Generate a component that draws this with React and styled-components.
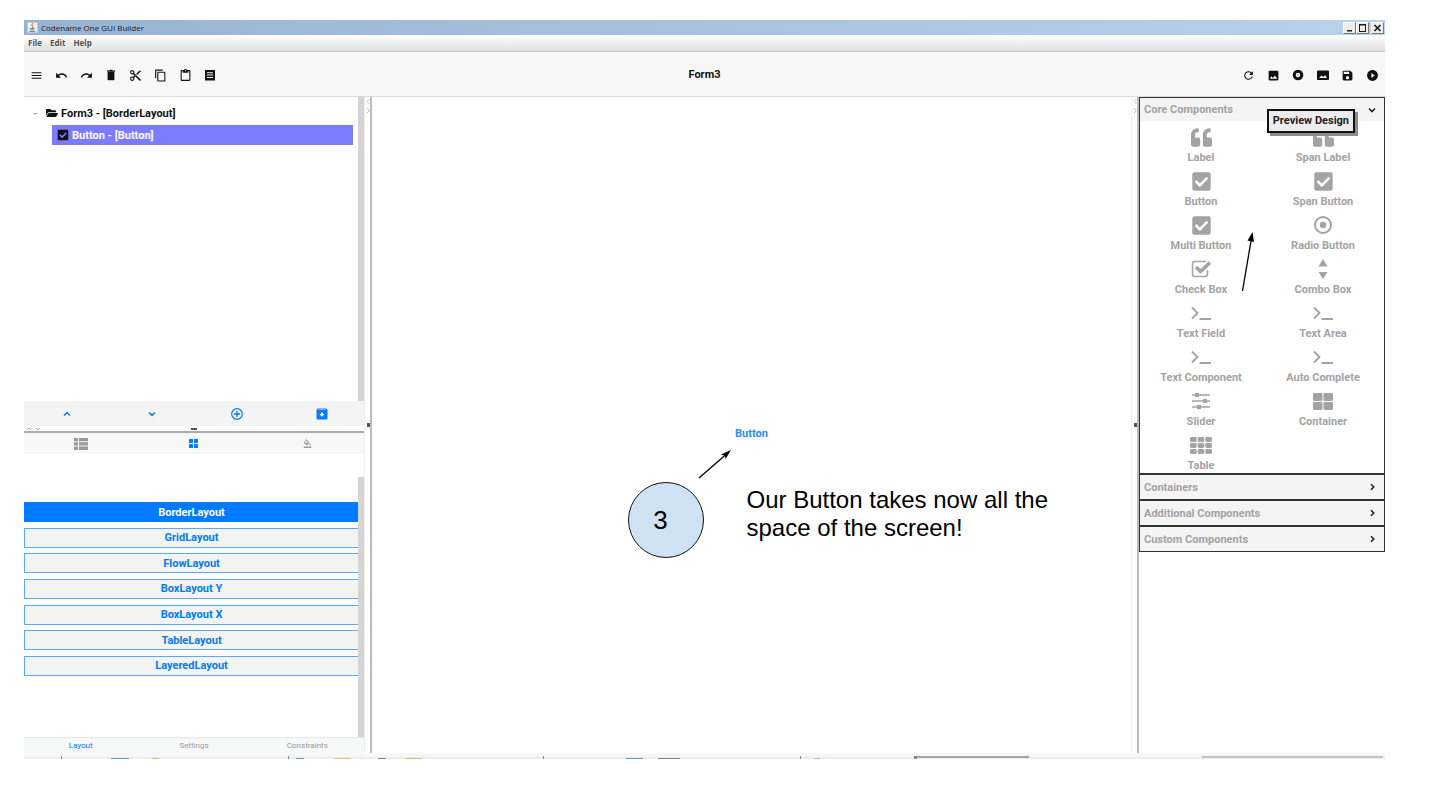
import React from 'react';
import styled, { createGlobalStyle } from 'styled-components';
import { FaQuoteLeft, FaCheckSquare, FaFolderOpen } from 'react-icons/fa';
import {
  MdMenu, MdUndo, MdRedo, MdContentCut, MdContentCopy, MdContentPaste, MdRefresh, MdSave,
  MdImage, MdPlayCircleFilled, MdFormatColorFill,
} from 'react-icons/md';

const ui = 'Roboto, "Liberation Sans", sans-serif';
const blue = '#007aff';

const GlobalStyle = createGlobalStyle`
  * { box-sizing: border-box; }
  body { margin: 0; background: #fff; font-family: ${ui}; font-size: 11px; }
  button { font: inherit; color: inherit; background: none; border: 0; padding: 0; margin: 0; }
  svg { display: block; flex: none; }
`;

const Page = styled.div`
  min-height: 100vh;
  padding: 20px 50px 38px 24px;
  display: flex;
`;
const Window = styled.div`
  flex: 1;
  min-width: 0;
  display: flex;
  flex-direction: column;
`;
const TitleBar = styled.header`
  height: 15px;
  display: flex;
  align-items: center;
  gap: 3px;
  padding: 0 1px 0 3px;
  background: linear-gradient(90deg, #98b3d1, #b9d1ea);
  font: 8px "Open Sans", sans-serif;
  color: #1b1b1b;
`;
const WindowTitle = styled.span`
  flex: 1;
`;
const WindowButtons = styled.div`
  display: flex;
`;
const WindowButton = styled.button`
  width: 13px;
  height: 12px;
  margin-left: ${(p) => (p.$apart ? '2px' : '0')};
  display: grid;
  place-items: center;
  background: #efedea;
  border: 1px solid;
  border-color: #fff #777 #777 #fff;
`;
const MenuBar = styled.nav`
  height: 17px;
  display: flex;
  align-items: center;
  gap: 8px;
  padding: 0 4px;
  background: linear-gradient(#fff, #dedede);
  border-bottom: 1px solid #c9c9c9;
  font: 700 8px/12px "Open Sans", sans-serif;
  color: #555;
`;
const Toolbar = styled.div`
  height: 45px;
  display: grid;
  grid-template-columns: 1fr auto 1fr;
  align-items: center;
  padding: 2px 6px 0;
  background: #f7f7f7;
  border-bottom: 1px solid #ddd;
  color: #111;
`;
const Tools = styled.div`
  display: flex;
  width: ${(p) => p.$width};
  justify-content: space-between;
  justify-self: ${(p) => p.$side};
`;
const FormTitle = styled.h1`
  margin: 0;
  font-size: 11px;
  line-height: 14px;
  color: #111;
`;
const Body = styled.div`
  flex: 1;
  display: flex;
  min-height: 0;
`;

const Sidebar = styled.aside`
  width: 340px;
  display: flex;
  flex-direction: column;
`;
const Tree = styled.ul`
  height: 304px;
  margin: 0;
  padding: 6px 5px 0 0;
  list-style: none;
  border-right: 6px solid #d4d4d4;
  font-weight: 700;
`;
const TreeRow = styled.li`
  height: 20px;
  display: flex;
  align-items: center;
  gap: 3px;
  padding-left: ${(p) => (p.$selected ? '5px' : '9px')};
  margin: ${(p) => (p.$selected ? '2px 0 0 28px' : '0')};
  background: ${(p) => (p.$selected ? '#7b7bff' : 'none')};
  color: ${(p) => (p.$selected ? '#fff' : '#111')};
  svg { color: #111; }
`;
const Toggle = styled.button`
  width: 10px;
  text-align: left;
  color: #999;
`;
const ActionBar = styled.div`
  height: 25px;
  display: flex;
  background: #f4f4f4;
  color: ${blue};
`;
const BarButton = styled.button`
  flex: 1;
  display: grid;
  place-items: center;
  color: ${(p) => (p.$active ? blue : '#999')};
  ${ActionBar} & { color: ${blue}; }
`;
const Splitter = styled.div`
  height: 7px;
  display: grid;
  grid-template-columns: 1fr auto 1fr;
  align-items: center;
  border-bottom: 2px solid #aaa;
  padding: 0 3px;
  svg { justify-self: start; }
`;
const TabBar = styled.div`
  height: 21px;
  display: flex;
  background: #f7f7f7;
`;
const LayoutArea = styled.div`
  flex: 1;
  display: flex;
  flex-direction: column;
  padding-top: 23px;
`;
const LayoutScroll = styled.div`
  flex: 1;
  padding-top: 25px;
  border-right: 6px solid #d4d4d4;
`;
const LayoutList = styled.div`
  height: 174px;
  display: flex;
  flex-direction: column;
  justify-content: space-between;
`;
const LayoutButton = styled.button`
  height: 20px;
  font-weight: 700;
  border: 1px solid ${(p) => (p.$selected ? blue : '#5aa7fb')};
  border-right: 0;
  background: ${(p) => (p.$selected ? blue : '#f3f3f2')};
  color: ${(p) => (p.$selected ? '#fff' : blue)};
`;
const FooterTabs = styled.div`
  height: 16px;
  display: flex;
  border-top: 1px solid #e6e6e6;
  background: #f7f8f8;
  font-size: 8px;
`;

const Divider = styled.div`
  width: 8px;
  display: grid;
  grid-template-rows: 1fr auto 1fr;
  align-items: start;
  justify-items: end;
  border-right: 2px solid #bbb;
  border-left: 1px solid #f0f0f0;
  background: #fff;
`;
const Grip = styled.span`
  width: 3px;
  height: 4px;
  background: #555;
`;

const Canvas = styled.main`
  flex: 1;
  position: relative;
  display: grid;
  background: #fff;
`;
const CanvasButton = styled.button`
  padding-top: 16px;
  font-weight: 700;
  color: #2a8cff;
`;
const Note = styled.div`
  position: absolute;
  left: calc(50% - 124px);
  top: 350px;
  width: 460px;
`;
const NoteArrow = styled.svg`
  margin-left: 68px;
`;
const NoteBody = styled.div`
  display: flex;
  align-items: flex-start;
  gap: 43px;
`;
const Step = styled.span`
  flex: none;
  width: 76px;
  height: 76px;
  padding-right: 10px;
  display: grid;
  place-items: center;
  border: 1px solid #111;
  border-radius: 50%;
  background: #cfe2f3;
  font: 26px "Liberation Sans", sans-serif;
`;
const NoteText = styled.p`
  margin: 0;
  padding-top: 4px;
  width: 310px;
  font: 24px/28px "Liberation Sans", sans-serif;
`;

const Palette = styled.aside`
  position: relative;
  width: 246px;
`;
const Accordion = styled.div`
  border: 1px solid #333;
`;
const SectionHeader = styled.button`
  width: 100%;
  height: ${(p) => (p.$open ? '23px' : '26px')};
  display: flex;
  align-items: center;
  justify-content: space-between;
  padding: 0 7px 0 4px;
  background: #f4f4f4;
  border-top: ${(p) => (p.$open ? '0' : '2px solid #333')};
  font-weight: 700;
  color: #a3a3a3;
`;
const Items = styled.div`
  display: grid;
  grid-template-columns: 1fr 1fr;
  grid-auto-rows: 44px;
`;
const Item = styled.button`
  display: grid;
  grid-template-rows: 28px 16px;
  justify-items: center;
  align-items: center;
  font-weight: 700;
  color: #a3a3a3;
  svg { margin-top: 4px; }
`;
const Tooltip = styled.div`
  position: absolute;
  top: 12px;
  right: 30px;
  padding: 3px 4px;
  border: 2px solid #111;
  background: #ececec;
  box-shadow: 3px 3px 0 #8c8c8c;
  font-weight: 700;
  line-height: 14px;
  white-space: nowrap;
  color: #222;
`;
const PointerArrow = styled.svg`
  position: absolute;
  top: 134px;
  right: 127px;
`;

const Taskbar = styled.svg`
  width: 100%;
  height: 6px;
`;

const Glyph = ({ w = 20, h = 20, box, children }) => (
  <svg width={w} height={h} viewBox={box || `0 0 ${w} ${h}`} fill="currentColor" aria-hidden="true">{children}</svg>
);
const Line = (p) => <path fill="none" stroke="currentColor" strokeWidth="2" {...p} />;

const Chevron = ({ d }) => <Glyph w={10} h={10}><Line d={d} strokeWidth="1.500" /></Glyph>;
const up = 'M2 6.5 5 3.5 8 6.5';
const down = 'M2 3.5 5 6.5 8 3.5';
const right = 'M4 2.2 6.8 5 4 7.8';

const Trash = () => <Glyph w={12} h={12}><path d="M2 1.500h2.200L5 .8h2l.8.7H10v1.200H2zM2.600 3h6.800v7.200q0 1.100-1.100 1.100H3.700q-1.100 0-1.100-1.100z" /></Glyph>;
const Sheet = () => <Glyph w={12} h={12}><path fillRule="evenodd" d="M1 1h10v10.400H1zM3 3.300v1h6v-1zM3 5.600v1h6v-1zM3 7.900v1h6v-1z" /></Glyph>;
const Ring = () => <Glyph w={12} h={12}><circle cx="6" cy="6" r="3.800" fill="none" stroke="currentColor" strokeWidth="3" /><circle cx="6" cy="6" r=".8" fill="#999" /></Glyph>;
const WideImage = () => <Glyph w={12} h={12}><path fillRule="evenodd" d="M1 1.500h10q1 0 1 1v7.500q0 1-1 1H1q-1 0-1-1V2.500q0-1 1-1zM2 9h8L8 6 6.500 8 4.500 6.500z" /></Glyph>;

const Dot = () => <Glyph><circle cx="10" cy="10" r="8" fill="none" stroke="currentColor" strokeWidth="2" /><circle cx="10" cy="10" r="3.200" /></Glyph>;
const CheckOutline = () => <Glyph><Line strokeWidth="1.500" d="M15 2.500H4Q1.500 2.500 1.500 5V15Q1.500 17.500 4 17.500H14Q16.500 17.500 16.500 15V11" /><Line strokeWidth="3.600" d="M5 8 9.500 12.500 19 3.500" /></Glyph>;
const Sort = () => <Glyph><path d="M10 0 14.500 7.500H5.500zM5.500 13H14.500L10 20z" /></Glyph>;
const Prompt = () => <Glyph><Line strokeWidth="1.800" d="M1 4.500 6.500 10 1 15.500M8.500 16H20" /></Glyph>;
const Sliders = () => (
  <Glyph>
    <Line strokeWidth="1.500" d="M1 4H19M1 10H19M1 16H19" />
    <path d="M4 2h4v4H4zM12 8h4v4h-4zM6 14h4v4H6z" />
  </Glyph>
);
const Blocks = ({ w, h, cols, rows, gap, r = 1.4 }) => {
  const bw = (w - gap * (cols - 1)) / cols;
  const bh = (h - gap * (rows - 1)) / rows;
  return (
    <Glyph w={w} h={h}>
      {Array.from({ length: cols * rows }, (_, i) => (
        <rect key={i} x={(i % cols) * (bw + gap)} y={Math.floor(i / cols) * (bh + gap)} width={bw} height={bh} rx={r} />
      ))}
    </Glyph>
  );
};
const ListIcon = () => (
  <Glyph w={14} h={12}><path d="M0 0h4v3.300H0zM5 0h9v3.300H5zM0 4.300h4v3.300H0zM5 4.300h9v3.300H5zM0 8.600h4v3.300H0zM5 8.600h9v3.300H5z" /></Glyph>
);
const CirclePlus = () => (
  <Glyph w={12} h={12}><circle cx="6" cy="6" r="5.300" fill="none" stroke="currentColor" strokeWidth="1.200" /><Line strokeWidth="1.300" d="M6 3V9M3 6H9" /></Glyph>
);
const ArchiveIcon = () => (
  <Glyph w={12} h={12}><path fillRule="evenodd" d="M1.500 .5h9l1 1.500v8.500q0 1-1 1h-9q-1 0-1-1V2zM2 2h8l-.4-.6H2.400zM5 4.500V6H3.200L6 8.800 8.800 6H7V4.500z" /></Glyph>
);

const JavaCup = () => (
  <svg width="11" height="11" viewBox="0 0 10 11" preserveAspectRatio="none" aria-hidden="true">
    <rect x=".5" y=".5" width="9" height="10" fill="#eef1f4" stroke="#c3ccd5" />
    <path d="M5.500 1.500Q3.500 3 5 4.200 5.800 5 4.800 6" fill="none" stroke="#e2762c" />
    <path d="M2.500 6.500H7M3 8H6.500M2 9.400H7.500" stroke="#5382a1" strokeWidth=".9" />
  </svg>
);

const leftTools = [
  ['Menu', MdMenu], ['Undo', MdUndo], ['Redo', MdRedo], ['Delete', Trash],
  ['Cut', MdContentCut], ['Copy', MdContentCopy], ['Paste', MdContentPaste], ['Source', Sheet],
];
const rightTools = [
  ['Refresh', MdRefresh], ['Image', MdImage], ['Record', Ring], ['Preview', WideImage],
  ['Save', MdSave], ['Run', MdPlayCircleFilled],
];
const layouts = ['BorderLayout', 'GridLayout', 'FlowLayout', 'BoxLayout Y', 'BoxLayout X', 'TableLayout', 'LayeredLayout'];

const Quote = () => <FaQuoteLeft size={21} />;
const Check = () => <FaCheckSquare size={21} />;
const Large = () => <Blocks w={20} h={17} cols={2} rows={2} gap={1} />;
const Table = () => <Blocks w={22} h={17} cols={3} rows={3} gap={1} />;
const components = [
  ['Label', Quote], ['Span Label', Quote],
  ['Button', Check], ['Span Button', Check],
  ['Multi Button', Check], ['Radio Button', Dot],
  ['Check Box', CheckOutline], ['Combo Box', Sort],
  ['Text Field', Prompt], ['Text Area', Prompt],
  ['Text Component', Prompt], ['Auto Complete', Prompt],
  ['Slider', Sliders], ['Container', Large],
  ['Table', Table],
];

const ToolGroup = ({ tools, width, side }) => (
  <Tools $width={width} $side={side}>
    {tools.map(([name, Icon]) => (
      <button key={name} type="button" aria-label={name}><Icon size={13} width={12} /></button>
    ))}
  </Tools>
);

const PaneDivider = () => (
  <Divider>
    <svg width="4" height="16" viewBox="0 0 4 16" fill="none" stroke="#bbb"><path d="M3.500 2 1 4.500 3.500 7M1 11 3.500 13.500 1 16" /></svg>
    <Grip />
  </Divider>
);

export default function App() {
  return (
    <Page>
      <GlobalStyle />
      <Window>
        <TitleBar>
          <JavaCup />
          <WindowTitle>Codename One GUI Builder</WindowTitle>
          <WindowButtons>
            <WindowButton type="button" aria-label="Minimize"><Glyph w={9} h={8}><path d="M2 6h5v1.500H2z" /></Glyph></WindowButton>
            <WindowButton type="button" aria-label="Maximize"><Glyph w={9} h={8}><path fillRule="evenodd" d="M1 0h7v8H1zM2 1.500V7h5V1.500z" /></Glyph></WindowButton>
            <WindowButton type="button" aria-label="Close" $apart><Glyph w={9} h={8}><Line strokeWidth="1.700" d="M1.500 1 7.500 7M7.500 1 1.500 7" /></Glyph></WindowButton>
          </WindowButtons>
        </TitleBar>
        <MenuBar>
          <button type="button">File</button>
          <button type="button">Edit</button>
          <button type="button">Help</button>
        </MenuBar>
        <Toolbar>
          <ToolGroup tools={leftTools} width="186px" side="start" />
          <FormTitle>Form3</FormTitle>
          <ToolGroup tools={rightTools} width="137px" side="end" />
        </Toolbar>
        <Body>
          <Sidebar>
            <Tree>
              <TreeRow><Toggle type="button" aria-label="Collapse">-</Toggle><FaFolderOpen size={12} />Form3 - [BorderLayout]</TreeRow>
              <TreeRow $selected><FaCheckSquare size={12} />Button - [Button]</TreeRow>
            </Tree>
            <ActionBar>
              <BarButton type="button" aria-label="Move up"><Chevron d={up} /></BarButton>
              <BarButton type="button" aria-label="Move down"><Chevron d={down} /></BarButton>
              <BarButton type="button" aria-label="Add"><CirclePlus /></BarButton>
              <BarButton type="button" aria-label="Archive"><ArchiveIcon /></BarButton>
            </ActionBar>
            <Splitter>
              <svg width="14" height="4" viewBox="0 0 14 4" fill="none" stroke="#aaa"><path d="M0 3 2 1 4 3M9 1 11 3 13 1" /></svg>
              <svg width="6" height="4" viewBox="0 0 6 4"><path d="M0 1H6V3H0z" fill="#555" /></svg>
            </Splitter>
            <TabBar>
              <BarButton type="button" aria-label="Properties"><ListIcon /></BarButton>
              <BarButton type="button" aria-label="Layouts" $active><Blocks w={9} h={9} cols={2} rows={2} gap={1} r={0.5} /></BarButton>
              <BarButton type="button" aria-label="Style"><MdFormatColorFill size={9} /></BarButton>
            </TabBar>
            <LayoutArea>
              <LayoutScroll>
                <LayoutList>
                  {layouts.map((name, i) => (
                    <LayoutButton key={name} type="button" $selected={i === 0}>{name}</LayoutButton>
                  ))}
                </LayoutList>
              </LayoutScroll>
            </LayoutArea>
            <FooterTabs>
              <BarButton type="button" $active>Layout</BarButton>
              <BarButton type="button">Settings</BarButton>
              <BarButton type="button">Constraints</BarButton>
            </FooterTabs>
          </Sidebar>
          <PaneDivider />
          <Canvas>
            <CanvasButton type="button">Button</CanvasButton>
            <Note>
              <NoteArrow width="40" height="35" viewBox="0 0 40 35" aria-hidden="true">
                <path d="M3 31 30 7.500" stroke="#000" strokeWidth="1.300" />
                <path d="M35 3 29.500 12 29 8.500 25 7.500z" />
              </NoteArrow>
              <NoteBody>
                <Step>3</Step>
                <NoteText>Our Button takes now all the space of the screen!</NoteText>
              </NoteBody>
            </Note>
          </Canvas>
          <PaneDivider />
          <Palette>
            <Accordion>
              <SectionHeader type="button" $open>Core Components<Glyph w={10} h={10}><Line stroke="#222" strokeWidth="1.600" d={down} /></Glyph></SectionHeader>
              <Items>
                {components.map(([name, Icon]) => (
                  <Item key={name} type="button"><Icon />{name}</Item>
                ))}
              </Items>
              {['Containers', 'Additional Components', 'Custom Components'].map((name) => (
                <SectionHeader key={name} type="button">{name}<Glyph w={10} h={10}><Line stroke="#222" strokeWidth="1.600" d={right} /></Glyph></SectionHeader>
              ))}
            </Accordion>
            <Tooltip role="tooltip">Preview Design</Tooltip>
            <PointerArrow width="18" height="62" viewBox="0 0 18 62" aria-hidden="true">
              <path d="M2.500 60 11 10" stroke="#000" strokeWidth="1.300" />
              <path d="M12.500 1 14 11 7.500 9.500z" />
            </PointerArrow>
          </Palette>
        </Body>
        <Taskbar viewBox="0 0 1361 6" preserveAspectRatio="none" aria-hidden="true">
          <path fill="#f7f7f7" d="M0 0H1361V6H0z" />
          <path fill="#ececec" d="M0 4H1361V6H0z" />
          <path fill="#888" d="M37 3h1v3h-1zM264 3h1v3h-1zM519 3h1v3h-1zM776 3h1v3h-1zM890 3h3v3h-3zM354 5h8v1h-8zM634 5h22v1h-22z" />
          <path fill="#6d94d8" d="M87 5h18v1H87zM602 5h17v1h-17zM272 5h8v1h-8z" />
          <path fill="#a8d080" d="M128 5h7v1h-7zM381 5h17v1h-17zM790 5h6v1h-6z" />
          <path fill="#ecc75c" d="M310 5h17v1h-17z" />
          <path fill="#a6a6a6" d="M893 3h112v2H893z" />
          <path fill="#c4c4c4" d="M1179 3h180v2h-180v1h-1V3z" />
        </Taskbar>
      </Window>
    </Page>
  );
}
